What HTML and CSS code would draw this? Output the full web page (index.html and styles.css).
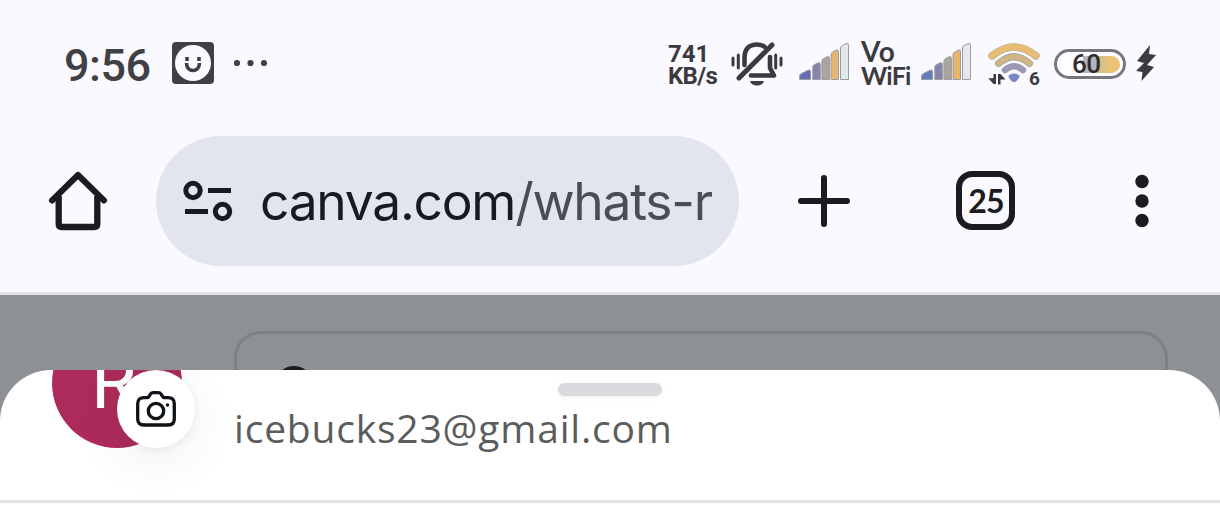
FILE: index.html
```html
<!DOCTYPE html>
<html lang="en">
<head>
<meta charset="utf-8">
<title>Canva</title>
<link rel="stylesheet" href="styles.css">
</head>
<body>
<div class="screen">
  <header class="status-bar">
    <span class="clock">9:56</span>
    <svg class="smiley" width="42" height="42" viewBox="0 0 42 42">
      <rect width="42" height="42" rx="4" fill="#404044"/>
      <circle cx="21" cy="21" r="18" fill="#faf9ff"/>
      <path d="M15 15v4M27 15v4" stroke="#404044" stroke-width="3.600"/>
      <path d="M14.500 21c0 10 13 10 13 0" fill="none" stroke="#404044" stroke-width="3.600"/>
    </svg>
    <svg class="more" width="36" height="8" viewBox="0 0 36 8" fill="#404044">
      <circle cx="4" cy="4" r="3.100"/><circle cx="17.500" cy="4" r="3.100"/><circle cx="31" cy="4" r="3.100"/>
    </svg>
    <div class="speed"><span>741</span><span class="unit">KB/s</span></div>
    <svg class="mute" width="52" height="46" viewBox="0 0 52 46" fill="none" stroke="#3b3b3f" stroke-width="4" stroke-linecap="round">
      <path d="M13.500 25V18C13.500 8 19 4.500 26 4.500c3 0 5.500.7 7.500 2.300M39 17v11l4 7.500H20" stroke-linejoin="round" stroke-width="4.600"/>
      <path d="M41 5 8 38" stroke-width="5"/>
      <path d="M2 18v7M7.300 15v13M44.700 15v13M50 18v7" stroke-width="3"/>
      <path d="M19 41h14c-1.500 6-12.500 6-14 0z" fill="#3b3b3f" stroke="none"/>
    </svg>
    <svg class="signal signal-one" width="51" height="38" viewBox="0 0 51 38" stroke="#9a9aa2" stroke-width="1">
      <path d="M.6 36.500V33q0-1.500 1.500-2.300l7-3.500q2.500-1 2.500 1.500v7.800z" fill="#666cb4"/>
      <path d="M13.800 36.500V24q0-1.500 1.500-2.300l3.700-1.800q2.300-1 2.300 1.500v15.100z" fill="#8784aa"/>
      <path d="M22.900 36.500V18q0-1.500 1.500-2.300l3.700-1.900q2.300-1 2.300 1.500v21.200z" fill="#aaa59c"/>
      <path d="M32 36.500V11.500q0-1.500 1.500-2.300l3.700-2q2.300-1 2.300 1.500v27.800z" fill="#e5b66b"/>
      <path d="M41.500 36.500V5q0-1.500 1.500-2.300l4-2q2.500-1 2.500 1.500v34.300z" fill="#e3e8e8"/>
    </svg>
    <div class="vowifi"><span class="vo">Vo</span><span>WiFi</span></div>
    <svg class="signal signal-two" width="51" height="38" viewBox="0 0 51 38" stroke="#9a9aa2" stroke-width="1">
      <path d="M.6 36.500V33q0-1.500 1.500-2.300l7-3.500q2.500-1 2.500 1.500v7.800z" fill="#667cbb"/>
      <path d="M13.800 36.500V24q0-1.500 1.500-2.300l3.700-1.800q2.300-1 2.300 1.500v15.100z" fill="#8784aa"/>
      <path d="M22.900 36.500V18q0-1.500 1.500-2.300l3.700-1.900q2.300-1 2.300 1.500v21.200z" fill="#aaa59c"/>
      <path d="M32 36.500V11.500q0-1.500 1.500-2.300l3.700-2q2.300-1 2.300 1.500v27.800z" fill="#e5b66b"/>
      <path d="M41.500 36.500V5q0-1.500 1.500-2.300l4-2q2.500-1 2.500 1.500v34.300z" fill="#e9e8e8"/>
    </svg>
    <svg class="wifi" width="54" height="46" viewBox="0 0 54 46" fill="none" stroke-linecap="round">
      <path d="M5 14Q27-4 49 14" stroke="#b0aca5" stroke-width="7.500"/>
      <path d="M5 14Q27-4 49 14" stroke="#e7bd72" stroke-width="6.300"/>
      <path d="M11.500 21.500Q27 8 42.500 21.500" stroke="#a6a39f" stroke-width="7"/>
      <path d="M11.500 21.500Q27 8 42.500 21.500" stroke="#d0b684" stroke-width="5.500"/>
      <path d="M18 28Q27 20.500 36 28" stroke="#9b98b3" stroke-width="6.500"/>
      <path d="M21.500 33.500q5.500-4 11 0 .5 2-2.500 5-3 3.500-6 0-3-3-2.500-5z" fill="#7987c4"/>
      <path d="M9 32H6.500v4.300H1.300L6.500 42H9zM11 42.500h2.500v-5h5L13.500 32H11z" fill="#3b3b3f"/>
      <text x="42" y="42.500" class="wifi-number">6</text>
    </svg>
    <div class="battery"><span class="battery-fill"></span><span class="battery-number">60</span></div>
    <svg class="bolt" width="20" height="36" viewBox="0 0 20 36"><path d="M14 0 1 16l7 2-8 8 6.500 1-1 9L18 22l-7-2 9-10-7-1z" fill="#3b3b3f"/></svg>
  </header>

  <nav class="toolbar">
    <svg class="home" width="60" height="60" viewBox="0 0 60 60" fill="none" stroke="#1b1b20" stroke-width="6.300" stroke-linejoin="round" stroke-linecap="round">
      <path d="M4 29.500 30 4 56 29.500" stroke-width="6"/>
      <path d="M10.700 25v28q0 3 3 3h32.600q3 0 3-3V25" stroke-linecap="butt"/>
    </svg>
    <div class="address">
      <svg width="50" height="42" viewBox="0 0 50 42" fill="none" stroke="#171a25" stroke-width="5">
        <circle cx="10" cy="10.500" r="7.200"/><circle cx="39.500" cy="31.500" r="7.200"/>
        <path d="M25 10.500h23M2 31.500h23"/>
      </svg>
      <span class="url">canva.com<span class="path">/whats-r</span></span>
    </div>
    <svg class="plus" width="52" height="52" viewBox="0 0 52 52" stroke="#1b1b20" stroke-width="6" stroke-linecap="round"><path d="M3 26h46M26 3v46"/></svg>
    <div class="tabs">25</div>
    <svg class="menu" width="14" height="54" viewBox="0 0 14 54" fill="#1b1b20"><circle cx="7" cy="7.500" r="6.700"/><circle cx="7" cy="27" r="6.700"/><circle cx="7" cy="46.500" r="6.700"/></svg>
  </nav>

  <main class="page">
    <div class="search-field"><span class="search-icon"></span></div>
    <section class="sheet">
      <div class="profile">
        <div class="avatar">R</div>
        <div class="camera">
          <svg width="40" height="36" viewBox="0 0 40 36" fill="none" stroke="#0e1318" stroke-width="3.300" stroke-linejoin="round">
            <path d="M8 6.700h2.500q2 0 3-2l.5-1q1-2 3-2h5.500q2 0 3 2l.5 1q1 2 3 2H32q6.300 0 6.300 6V28q0 6-6.300 6H8q-6.300 0-6.300-6V12.700q0-6 6.300-6z"/>
            <circle cx="20" cy="20" r="7.700"/><circle cx="31.500" cy="14" r="1.700" fill="#0e1318" stroke="none"/>
          </svg>
        </div>
        <span class="email">icebucks23@gmail.com</span>
      </div>
      <div class="handle"></div>
    </section>
  </main>
</div>
</body>
</html>
```
FILE: styles.css
```css
* { box-sizing: border-box; }
body { margin: 0; }
svg { display: block; flex: none; }
.screen {
  display: flex;
  flex-direction: column;
  width: 1220px;
  height: 530px;
  overflow: hidden;
  background: #faf9ff;
}
.status-bar {
  display: flex;
  align-items: flex-start;
  height: 128px;
  padding: 0 62px 0 64px;
  color: #3b3b3f;
  font-family: Roboto, sans-serif;
}
.clock {
  width: 88px;
  margin-top: 40px;
  font-size: 45px;
  line-height: 52px;
  font-weight: 500;
  letter-spacing: -0.5px;
  color: #404044;
}
.smiley { margin: 42px 0 0 20px; }
.more { margin: 59px 0 0 19px; }
.speed {
  display: flex;
  flex-direction: column;
  width: 60px;
  margin: 43px 0 0 399px;
  font-size: 24px;
  line-height: 22px;
  font-weight: 700;
}
.unit { letter-spacing: -0.7px; }
.mute { margin: 40px 0 0 3px; }
.signal-one { margin: 43px 0 0 16px; }
.vowifi {
  display: flex;
  flex-direction: column;
  width: 50px;
  margin: 39px 0 0 11px;
  font-family: Lato, sans-serif;
  font-weight: 700;
  font-size: 25px;
  line-height: 24px;
  letter-spacing: -0.8px;
}
.vo { font-size: 28px; letter-spacing: 0.5px; }
.signal-two { margin: 43px 0 0 10px; }
.wifi { margin: 42px 0 0 15px; }
.wifi-number { font: 700 19px Roboto, sans-serif; fill: #3b3b3f; }
.battery {
  display: flex;
  position: relative;
  width: 72px;
  height: 30px;
  margin: 49px 0 0 13px;
  padding: 4px 3px;
  border: 3px solid #77767f;
  border-radius: 15px;
  background: #fdfcff;
}
.battery-fill {
  width: 37px;
  height: 17px;
  margin: -0.5px 0 0 auto;
  border-radius: 0 9px 9px 0;
  background: linear-gradient(90deg, #b5b5bc 0 36%, #d6bd90 42%, #edc373 80%);
}
.battery-number {
  position: absolute;
  left: 15px;
  top: -3px;
  font-size: 26px;
  line-height: 30px;
  font-weight: 500;
  letter-spacing: -0.5px;
  color: #2d2d30;
}
.bolt { margin: 45px 0 0 10px; }

.toolbar {
  display: flex;
  align-items: flex-start;
  height: 167px;
  border-bottom: 3px solid #e2e3e8;
  padding-left: 48px;
}
.home { margin-top: 43px; }
.address {
  display: flex;
  align-items: center;
  width: 583px;
  height: 130px;
  margin: 8px 0 0 48px;
  padding-left: 27px;
  border-radius: 65px;
  background: #e2e5f0;
}
.url {
  margin-left: 27px;
  font: 400 51.5px/64px Inter, sans-serif;
  letter-spacing: -1.25px;
  white-space: nowrap;
  color: #171a25;
}
.path { color: #4a4c56; }
.plus { margin: 47px 0 0 59px; }
.tabs {
  display: flex;
  align-items: center;
  justify-content: center;
  width: 59px;
  height: 59px;
  margin: 43px 0 0 106px;
  border: 6px solid #1b1b20;
  border-radius: 16px;
  padding: 1px 0 0 1px;
  font: 700 32px/32px Lato, sans-serif;
  letter-spacing: -0.8px;
  color: #1b1b20;
}
.menu { margin: 46px 0 0 120px; }

.page {
  display: flex;
  flex-direction: column;
  flex: 1;
  padding-top: 36px;
  background: #8d9195;
}
.search-field {
  width: 934px;
  height: 39px;
  margin-left: 234px;
  padding: 32px 0 0 38px;
  border: 3px solid #7b8284;
  border-bottom: 0;
  border-radius: 27px 27px 0 0;
  overflow: hidden;
}
.search-icon {
  display: block;
  width: 38px;
  height: 38px;
  border: 4px solid #191c20;
  border-radius: 50%;
}
.sheet {
  position: relative;
  height: 160px;
  border-radius: 51px 51px 0 0;
  background: #fff;
  overflow: hidden;
}
.profile {
  display: flex;
  align-items: flex-start;
  height: 133px;
  padding-left: 52px;
  border-bottom: 3px solid #e1e2e2;
}
.avatar {
  flex: none;
  width: 130px;
  height: 130px;
  margin-top: -52px;
  border-radius: 50%;
  background: #ad2b5b;
  color: #fff;
  font: 400 74px/130px Roboto, sans-serif;
  padding-left: 39px;
}
.camera {
  display: flex;
  align-items: center;
  justify-content: center;
  width: 78px;
  height: 78px;
  margin-left: -65px;
  border-radius: 50%;
  background: #fff;
  box-shadow: 0 2px 8px rgba(40, 60, 80, .08), 0 12px 48px rgba(40, 60, 80, .08);
  z-index: 1;
}
.email {
  margin: 30px 0 0 39px;
  font: 400 39px/56px "Open Sans", sans-serif;
  letter-spacing: 0.8px;
  white-space: nowrap;
  color: #5b5c5c;
}
.handle {
  position: absolute;
  left: 558px;
  top: 13px;
  width: 104px;
  height: 13px;
  border-radius: 7px;
  background: #d9dadd;
  box-shadow: 0 1px 6px rgba(40, 60, 80, .08);
}
```
